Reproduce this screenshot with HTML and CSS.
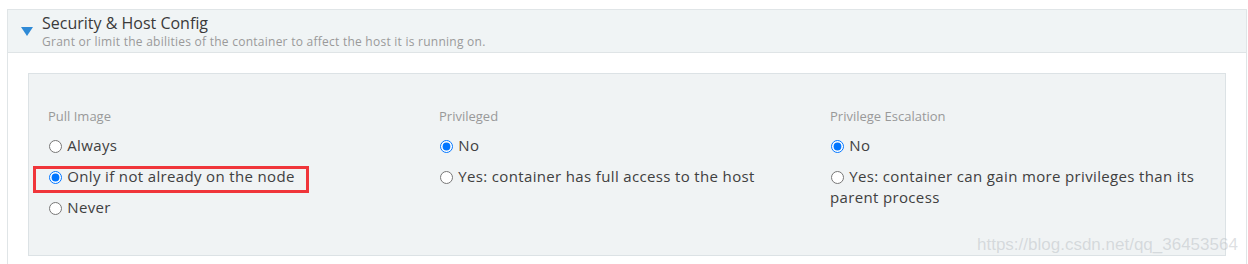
FILE: index.html
```html
<!DOCTYPE html>
<html>
<head>
<meta charset="utf-8">
<link rel="stylesheet" href="styles.css">
</head>
<body>
<div class="panel">
  <div class="panel-header">
    <svg class="caret" width="12" height="9" viewBox="0 0 12 9"><polygon points="0,0 12,0 6,9" fill="#2f8ad6"/></svg>
    <div class="titles">
      <div class="title">Security &amp; Host Config</div>
      <div class="subtitle">Grant or limit the abilities of the container to affect the host it is running on.</div>
    </div>
  </div>
  <div class="panel-body">
    <div class="box">
      <div class="col">
        <div class="label">Pull Image</div>
        <div class="option"><input type="radio" name="pull"> Always</div>
        <div class="option highlight"><input type="radio" name="pull" checked> Only if not already on the node</div>
        <div class="option"><input type="radio" name="pull"> Never</div>
      </div>
      <div class="col">
        <div class="label">Privileged</div>
        <div class="option"><input type="radio" name="priv" checked> No</div>
        <div class="option"><input type="radio" name="priv"> Yes: container has full access to the host</div>
      </div>
      <div class="col">
        <div class="label">Privilege Escalation</div>
        <div class="option"><input type="radio" name="esc" checked> No</div>
        <div class="option"><input type="radio" name="esc"> Yes: container can gain more privileges than its parent process</div>
      </div>
    </div>
  </div>
</div>
<div class="watermark">https://blog.csdn.net/qq_36453564</div>
</body>
</html>
```
FILE: styles.css
```css
html, body {
  margin: 0;
  padding: 0;
  background: #fff;
  font-family: "Open Sans", "Noto Sans", sans-serif;
  color: #3b3b3b;
  height: 264px;
  overflow: hidden;
}
.panel {
  margin: 9px 1px 0 7px;
  border: 1px solid #e0e5e7;
  border-bottom: none;
}
.panel-header {
  display: flex;
  align-items: flex-start;
  background: #f0f4f5;
  border-bottom: 1px solid #dfe4e6;
  height: 43px;
  padding-left: 13px;
  box-sizing: border-box;
}
.caret {
  margin-top: 17px;
  margin-right: 9px;
  flex: none;
}
.titles {
  padding-top: 3px;
}
.title {
  font-size: 16px;
  line-height: 20px;
  color: #3a3a3a;
}
.subtitle {
  margin-top: 1px;
  font-size: 12px;
  line-height: 15px;
  letter-spacing: 0.25px;
  color: #9a9a9a;
}
.panel-body {
  padding: 20px 20px 20px 20px;
}
.box {
  background: #f0f3f4;
  border: 1px solid #dce2e5;
  padding: 32px 19px 37px 19px;
  display: grid;
  grid-template-columns: 373px 373px 373px;
  column-gap: 18px;
}
.label {
  font-size: 13px;
  line-height: 20px;
  color: #999;
  margin-bottom: 9px;
}
.option {
  font-size: 15px;
  line-height: 21px;
  letter-spacing: 0.35px;
  margin-bottom: 10px;
  color: #404040;
}
.option:last-child {
  margin-bottom: 0;
}
.option input {
  width: 13px;
  height: 13px;
  margin: 0 1px 0 1px;
  vertical-align: -2px;
}
.highlight {
  position: relative;
  width: max-content;
}
.highlight::after {
  content: "";
  position: absolute;
  top: 0;
  bottom: -6px;
  left: -15px;
  right: -14px;
  border: 3px solid #f0353a;
}
.watermark {
  position: absolute;
  left: 977px;
  top: 235px;
  font-family: "Liberation Sans", Arial, sans-serif;
  font-size: 17px;
  color: rgba(180, 185, 190, 0.45);
}
```
